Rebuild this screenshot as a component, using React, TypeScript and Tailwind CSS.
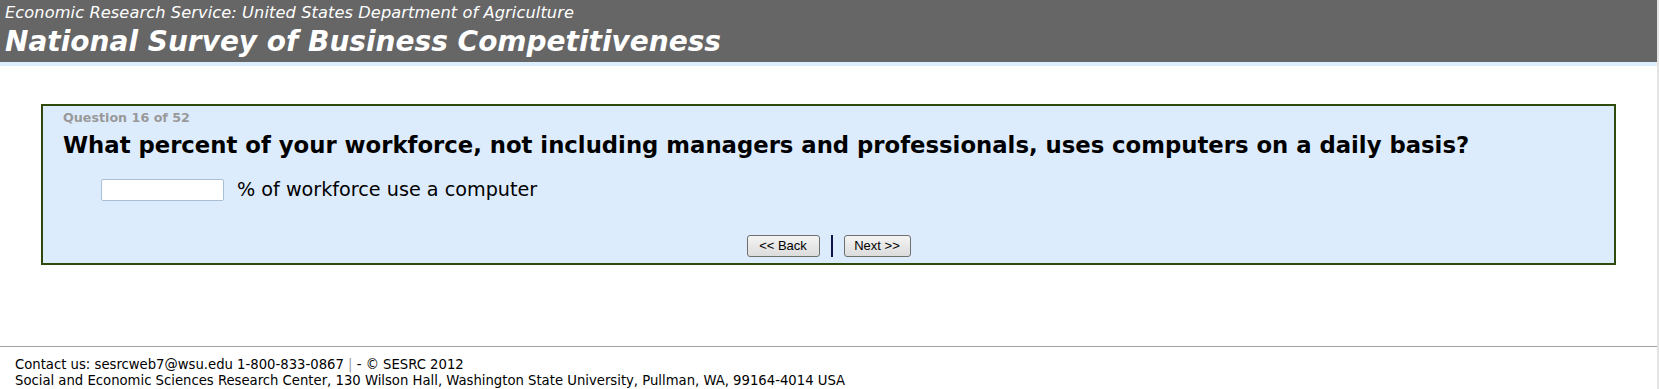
export default function App() {
  const verdana = { fontFamily: '"DejaVu Sans", Verdana, sans-serif' };
  const arial = { fontFamily: '"Liberation Sans", Arial, sans-serif' };
  return (
    <div className="flex h-[389px] w-full overflow-hidden bg-white">
      <div className="flex min-w-0 flex-1 flex-col" style={verdana}>
        <header className="h-[62px] bg-[#666666] px-[5px] text-white">
          <div className="pt-[3px] text-[16.2px] italic leading-[20px] tracking-[0.1px]">
            Economic Research Service: United States Department of Agriculture
          </div>
          <h1 className="mt-[2px] text-[28px] font-bold italic leading-[34px]">
            National Survey of Business Competitiveness
          </h1>
        </header>
        <div className="h-[4px] bg-[#ddeeff]" />

        <main className="mx-[41px] mt-[38px] h-[161px] border-2 border-[#2f4a0a] bg-[#ddecfc] px-[20px] pt-[4px]">
          <div className="text-[12.7px] font-bold leading-[16px] text-[#999999]">Question 16 of 52</div>
          <h2 className="mt-[5px] text-[22.75px] font-bold leading-[28px] text-black">
            What percent of your workforce, not including managers and professionals, uses computers on a daily basis?
          </h2>
          <div className="mt-[20px] flex h-[22px] items-center pl-[38px]">
            <input
              type="text"
              className="h-[22px] w-[123px] rounded-[2px] border border-[#a9bfd6] bg-white outline-none"
            />
            <span className="ml-[13px] text-[19.2px] leading-[22px] text-black">% of workforce use a computer</span>
          </div>
          <div className="mt-[34px] flex items-center justify-center gap-[11px]">
            <button
              type="button"
              className="h-[22px] w-[73px] rounded-[3px] border border-[#707070] bg-gradient-to-b from-[#f4f4f4] to-[#dcdcdc] text-[13px] text-black"
              style={arial}
            >
              &lt;&lt; Back
            </button>
            <div className="h-[22px] w-[2px] bg-[#10104a]" />
            <button
              type="button"
              className="h-[22px] w-[67px] rounded-[3px] border border-[#707070] bg-gradient-to-b from-[#f4f4f4] to-[#dcdcdc] text-[13px] text-black"
              style={arial}
            >
              Next &gt;&gt;
            </button>
          </div>
        </main>

        <footer className="mt-[81px] border-t border-[#a0a0a0] px-[15px] pt-[9px] text-[14.7px] leading-[16px] text-black [font-stretch:condensed]">
          <div>
            Contact us: sesrcweb7@wsu.edu 1-800-833-0867 <span className="text-[#999999]">|</span> - © SESRC 2012
          </div>
          <div>
            Social and Economic Sciences Research Center, 130 Wilson Hall, Washington State University, Pullman, WA, 99164-4014 USA
          </div>
        </footer>
      </div>
      <div className="w-[2px] bg-[#e4e4e4]" />
    </div>
  );
}
